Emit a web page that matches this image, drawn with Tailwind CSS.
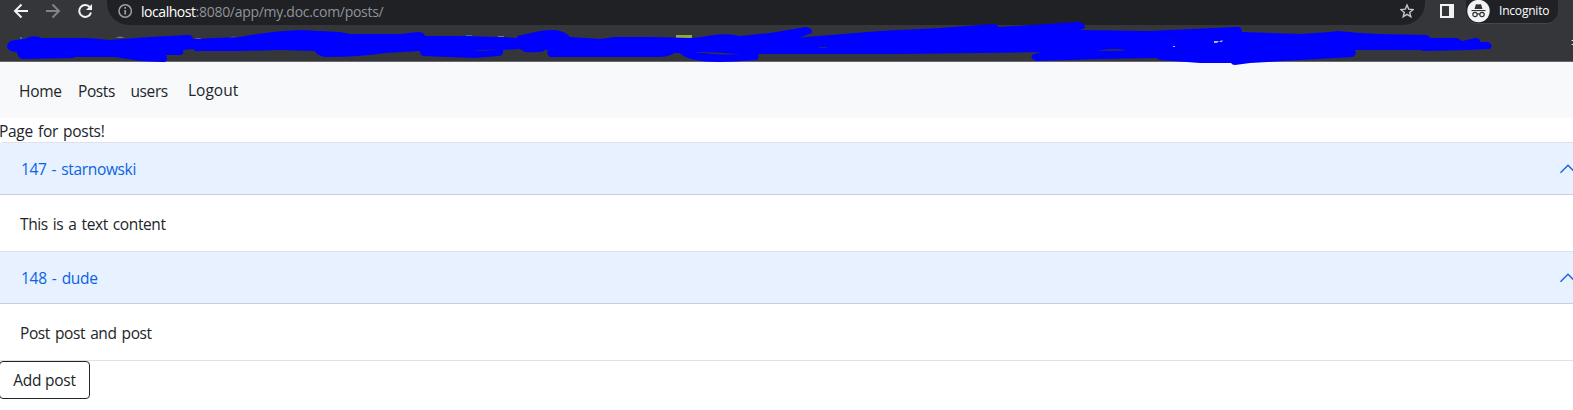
<!DOCTYPE html>
<html lang="en">
<head>
<meta charset="utf-8">
<title>Posts</title>
<script src="https://cdn.jsdelivr.net/npm/@tailwindcss/browser@4"></script>
</head>
<body class="relative h-[410px] w-[1573px] overflow-hidden bg-white font-['Open_Sans','Noto_Sans',sans-serif] text-[15.5px] leading-6 text-[#212529]">
<header class="h-[62px] border-b border-[#67666b] bg-[#35363a]">
  <div class="flex h-[25px] items-start">
    <svg class="h-[25px] w-[107px] shrink-0" viewBox="0 0 107 25" fill="none" stroke-width="2">
      <path d="M28 11H15.500M21.500 4.500L15 11l6.500 6.500" stroke="#f1f3f4"/>
      <path d="M46 11h12.500M52.500 4.500L59 11l-6.500 6.500" stroke="#828386"/>
      <path d="M90 7.300A6 6 0 1 0 91 12.500" stroke="#f1f3f4"/>
      <path d="M92 4v6h-6z" fill="#f1f3f4"/>
    </svg>
    <div class="flex h-[25px] w-[1318px] shrink-0 items-start rounded-b-[22px] bg-[#202124]">
      <svg class="ml-[11px] h-[23px] w-[15px] shrink-0" viewBox="0 0 15 23" fill="none" stroke="#9aa0a6" stroke-width="1.500"><circle cx="7.200" cy="11" r="6.200"/><path d="M7.200 10v4.500M7.200 7v1.700" stroke-width="1.700"/></svg>
      <div class="ml-2 mt-[2px] whitespace-nowrap text-[14px] leading-[19px] tracking-[-0.29px] text-[#8f949a]"><span class="tracking-[-0.45px] text-white">localhost</span>:8080/app/my.doc.com/posts/</div>
      <svg class="ml-auto mr-[11px] h-[23px] w-[14px]" viewBox="0 0 14 23" fill="none" stroke="#c4c7ca" stroke-width="1.400"><path d="M7 5l1.700 4.100 4.400.4-3.400 2.900 1.100 4.300L7 14.400l-3.800 2.300 1.100-4.300L.9 9.500l4.400-.4z"/></svg>
    </div>
    <svg class="ml-[15px] h-[22px] w-[14px] shrink-0" viewBox="0 0 14 22"><path fill="#f1f3f4" fill-rule="evenodd" d="M0 4h14v14H0zM2 6v10h7V6z"/></svg>
    <div class="ml-[12px] flex h-[24px] w-[92px] shrink-0 rounded-b-[12px] border-b border-[#46474b] bg-[#202124]">
      <svg class="ml-px h-[23px] w-[23px] shrink-0" viewBox="0 0 23 23"><circle cx="11.500" cy="11" r="11.200" fill="#f1f3f4"/><g fill="#303134"><path d="M7.500 9l1.300-4.300c.3-.8.800-.6 2.700-.2 1.900-.4 2.400-.6 2.700.2L15.500 9z"/><path d="M4.500 10h14v1.100h-14z"/></g><g fill="none" stroke="#303134" stroke-width="1.200"><circle cx="8" cy="14.500" r="2.200"/><circle cx="15" cy="14.500" r="2.200"/><path d="M10.200 14.300q1.300-.7 2.600 0"/></g></svg>
      <span class="ml-[9px] mt-[2px] text-[12px] leading-[18px] tracking-[-0.2px] text-white">Incognito</span>
    </div>
  </div>
  <div class="flex h-[36px] items-center justify-end text-[#dee1e6]"><svg class="h-2 w-[2px]" viewBox="0 0 2 8" fill="currentColor"><path d="M.500 1H2v1H.500zM.500 5H2v1H.500z"/></svg></div>
</header>
<svg class="absolute left-0 top-0 h-[68px] w-[1573px]" viewBox="0 0 1573 68">
  <g fill="#767779"><path d="M41 38h1v1h-1zM86 38h1v1h-1zM115 38q5-3 10 0zM196 38h5v1h-5zM229 38q5-3 9 0z"/><path d="M498 36h6v1h-6z"/></g>
  <path d="M466 35h6v1h-6zM20 37h2v2h-2z" fill="#1976d2"/><path d="M676 35h16v3h-16z" fill="#96a83b"/>
  <path fill="#00f" d="M7 47Q7 41 15 40L25 39Q32 34 42 38L87 38 110 40 150 37 188 35Q193 35 193 39L240 37Q270 31 300 30L340 32 350 34 400 34 418 32Q424 32 425 36L460 36 500 37 517 38Q517 35 522 35L540 31Q560 28 568 35L570 37 600 39 615 37 650 37 690 38 702 37Q725 32 740 36L770 33 806 27Q813 28 812 33L800 37.500 880 31 940 28 993 24Q998 24 998 27L1078 22Q1085 22 1085 28L1080 30 1150 31 1235 27Q1242 26 1242 32L1300 34 1330 32 1338 31 1360 33 1378 34 1427 35 1431 38 1457 38 1462 41 1476 38Q1480 38 1480 42L1488 42Q1494 45 1490 49L1470 50 1423 51 1420 50 1355 50Q1357 55 1353 57L1300 60 1250 63 1235 65Q1232 65 1231 63L1200 63 1160 60 1156 58 1100 59 1036 61Q1028 57 1034 54L1042 52 980 53 900 54 758 54Q760 59 756 60L735 61.500Q690 64 680 53L674 53Q671 56 660 57L550 57Q546 55 548 50L545 50Q543 53 525 52L520 49 503 50Q504 56 498 56L475 58 423 56Q420 55 420 51L385 53Q360 57 325 57 316 55 315 51L280 50 240 51 195 51 193 49 183 50Q184 55 180 55L166 55Q169 62 163 62L140 61 115 57 75 57 73 58 22 59Q17 57 17 52 9 52 7 47Z"/>
  <g fill="#35363a"><path d="M471 50.200l27-.800-14 1.400zM694 52q24-.5 47 2.500-26 .5-47-2.500zM819 47h8v.8h-8zM1097 51q16-3.500 30-.5z"/></g>
  <path d="M1155 38.200h22v.3h-22zM962 40.200h5v.4h-5z" fill="#1c1d83"/>
  <path d="M1173 46h2v1h-2zM1214 41h4l1 1 2-1.500h2l-1 1.500h-4l-1 1h-3z" fill="#b8bcc8"/>
</svg>
<nav class="flex h-14 items-center bg-[#f8f9fb] pl-[19px] pt-px">
  <a class="w-[59px] tracking-[-0.3px]">Home</a>
  <a class="w-[52.500px] tracking-[-0.4px]">Posts</a>
  <a class="w-[57.500px] tracking-[-0.4px]">users</a>
  <a class="-mt-[2px] tracking-[0px]">Logout</a>
</nav>
<main class="[word-spacing:1.4px]">
  <p class="-ml-px h-6 whitespace-nowrap pt-px tracking-[-0.3px]">Page for posts!</p>
  <section class="w-[1593px] rounded-t border-t border-[#dee2e6]">
    <article>
      <h2 class="flex h-[52px] items-center border-b border-[#c6d0df] bg-[#e7f1ff] pl-[21px] text-[#0c63e4]"><span class="pt-px tracking-[-0.35px]">147 - starnowski</span><svg class="ml-auto mr-[15px] h-5 w-5" viewBox="0 0 16 16" fill="none" stroke="currentColor"><path d="M2 11l6-6 6 6"/></svg></h2>
      <p class="flex h-14 items-center pl-5 pt-px tracking-[-0.4px]">This is a text content</p>
    </article>
    <article class="border-y border-[#dee2e6]">
      <h2 class="flex h-[52px] items-center border-b border-[#c6d0df] bg-[#e7f1ff] pl-[21px] text-[#0c63e4]"><span class="pt-px tracking-[-0.3px]">148 - dude</span><svg class="ml-auto mr-[15px] h-5 w-5" viewBox="0 0 16 16" fill="none" stroke="currentColor"><path d="M2 11l6-6 6 6"/></svg></h2>
      <p class="flex h-14 items-center pl-5 pt-px tracking-[-0.4px]">Post post and post</p>
    </article>
  </section>
  <button class="-ml-px block h-[38px] w-[91px] rounded border border-[#212529] text-center tracking-[-0.25px]">Add post</button>
</main>
</body>
</html>
